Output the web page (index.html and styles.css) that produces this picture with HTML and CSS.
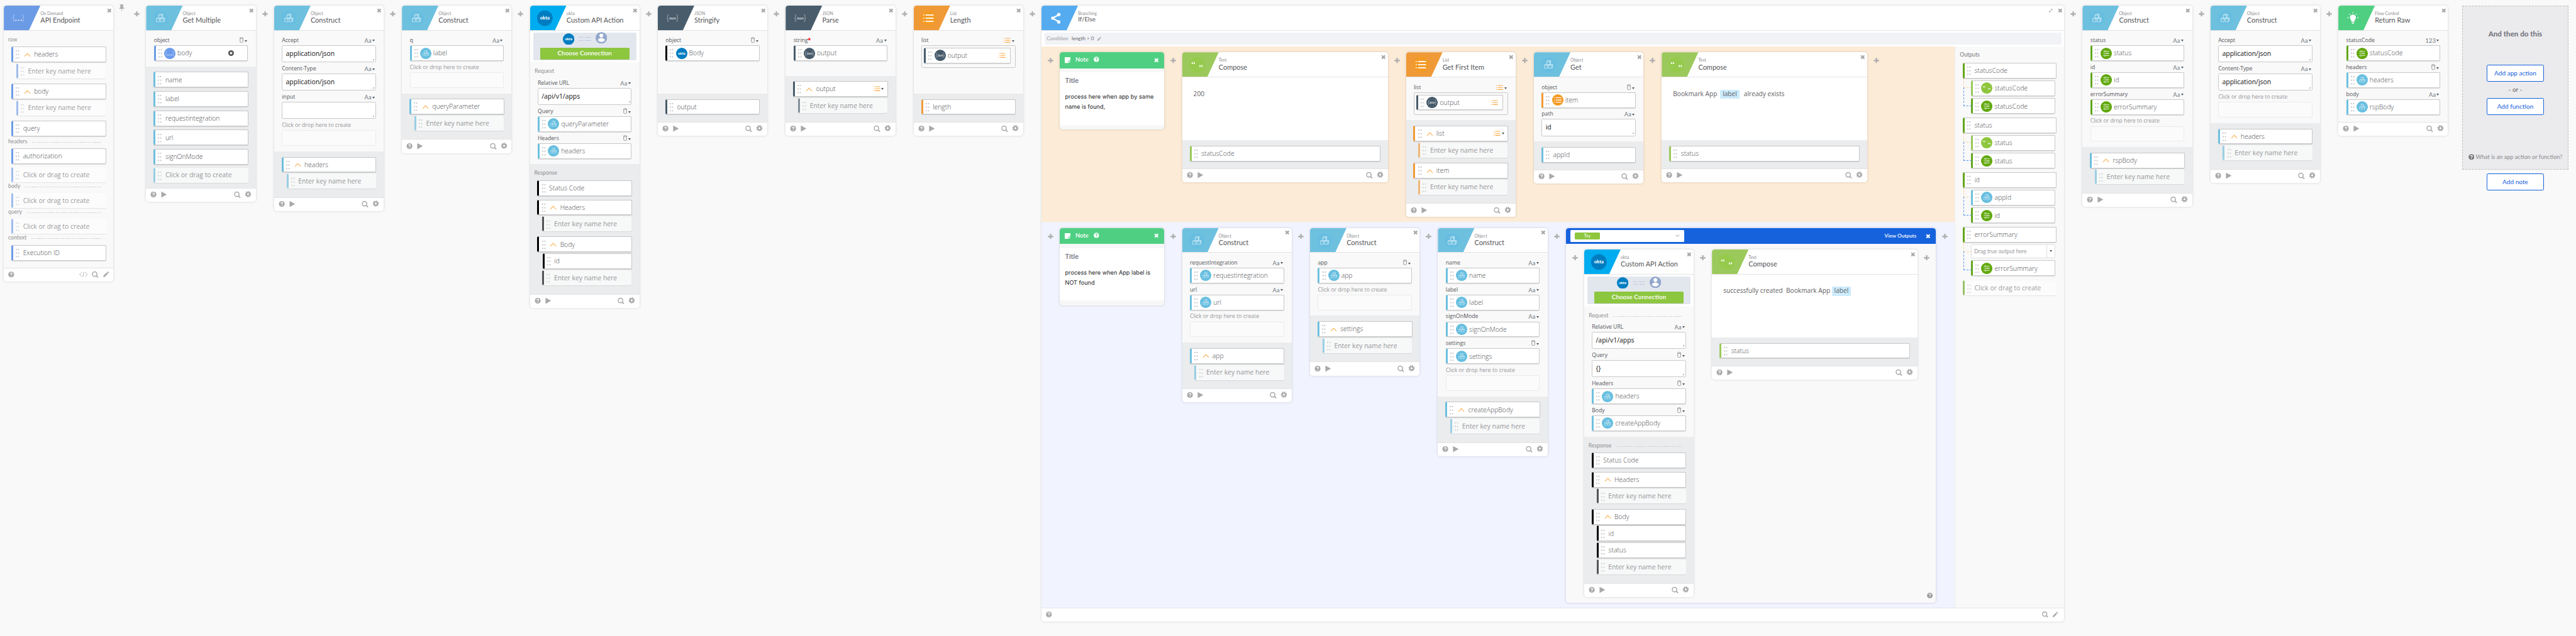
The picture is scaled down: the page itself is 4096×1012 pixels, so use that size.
FILE: index.html
```html
<!DOCTYPE html>
<html lang="en">
<head>
<meta charset="utf-8">
<title>Flow editor</title>
<link rel="stylesheet" href="styles.css">
</head>
<body>
<svg class="defs" aria-hidden="true">
  <symbol id="plus" viewBox="0 0 38 11"><path d="M13.5 5.5h11M19 0v11" stroke="#b0b0b0" stroke-width="3.1"/></symbol>
  <symbol id="close" viewBox="0 0 10 10"><path d="M1.6 1.6l6.8 6.8M8.4 1.6L1.6 8.4" stroke="currentColor" stroke-width="2.9"/></symbol>
  <symbol id="clear" viewBox="0 0 12 12"><circle cx="6" cy="6" r="6" fill="#4d4d4d"/><path d="M3.700 3.700l4.600 4.600M8.300 3.700l-4.600 4.600" stroke="#fff" stroke-width="1.900"/></symbol>
  <symbol id="pin" viewBox="0 0 12 14"><path d="M2 0h8v1.6H8.8v4L11 8v1.2H1V8l2.200-2.400v-4H2z" fill="#adadad"/><path d="M6 9v5" stroke="#adadad" stroke-width="1.300"/></symbol>
  <symbol id="help" viewBox="0 0 13 13"><circle cx="6.500" cy="6.500" r="6.300" fill="currentColor"/><path d="M4.500 5.200c0-2.600 4-2.500 4-.2 0 1.500-2 1.500-2 2.900" fill="none" stroke="var(--q,#fff)" stroke-width="1.500"/><circle cx="6.500" cy="9.900" r=".95" fill="var(--q,#fff)"/></symbol>
  <symbol id="pencil" viewBox="0 0 13 13"><path d="M1 12l.8-3.300 5.900-5.900 2.500 2.500-5.900 5.900zM8.500 2l1.100-1.100q.6-.6 1.200 0l1.300 1.300q.6.6 0 1.200L11 4.500z" fill="currentColor"/></symbol>
  <symbol id="glass" viewBox="0 0 14 14"><circle cx="5.900" cy="5.900" r="4.800" fill="none" stroke="currentColor" stroke-width="1.900"/><path d="M9.300 9.300l3.800 3.800" stroke="currentColor" stroke-width="2.200"/></symbol>
  <symbol id="gear" viewBox="0 0 14 14"><circle cx="7" cy="7" r="3.500" fill="none" stroke="currentColor" stroke-width="2.900"/><circle cx="7" cy="7" r="5.400" fill="none" stroke="currentColor" stroke-width="2.200" stroke-dasharray="2.120 2.120"/></symbol>
  <symbol id="run" viewBox="0 0 60 29"><use href="#help" x="9.500" y="7.500" width="12.600" height="12.600"/><path d="M32 7.400v12.800L43.500 13.800z" fill="currentColor"/></symbol>
  <symbol id="view" viewBox="0 0 60 29"><use href="#glass" x="14.500" y="7.300" width="14" height="14"/><use href="#gear" x="36.800" y="6" width="14" height="14"/></symbol>
  <symbol id="edit" viewBox="0 0 90 29"><path d="M23.500 9.500l-4.500 4.500 4.500 4.500M30.500 9.500l4.500 4.500-4.500 4.500M28.300 8.700l-2.600 10.600" fill="none" stroke="currentColor" stroke-width="1.100"/><use href="#glass" x="44.500" y="7.300" width="14" height="14"/><use href="#pencil" x="67" y="7.300" width="13.500" height="13.500"/></symbol>
  <symbol id="cubes" viewBox="0 0 20 18"><g fill="none" stroke="#fff" stroke-width="1" stroke-opacity=".75" stroke-linejoin="round"><path d="M1 10.500h6.600v6.200H1zM1 10.500l1.700-2h3.500M10 10.500h6.600v6.200H10zM10 10.500l1.600-2h6.900l-1.900 2M18.500 8.500v6.100l-1.900 2.100M6.200 2.700h6.500v5.800H6.200zM6.200 2.700L7.800.8h6.500l-1.600 1.900M14.300.8v5.700l-1.600 2M7.600 10.500l1.600-2"/></g></symbol>
  <symbol id="rows" viewBox="0 0 20 15"><path d="M0 1.500h2M4.500 1.500H20M0 7.500h2M4.500 7.500H20M0 13.500h2M4.500 13.500H20" stroke="currentColor" stroke-width="2.100"/></symbol>
  <symbol id="can" viewBox="0 0 8 12"><path d="M1 2v8c0 2 6 2 6 0V2" fill="none" stroke="#7d8286" stroke-width="1.100"/><ellipse cx="4" cy="2" rx="3" ry="1.300" fill="none" stroke="#7d8286"/></symbol>
  <symbol id="quotes" viewBox="0 0 24 14"><g fill="#fff" opacity=".9"><circle cx="2" cy="4" r="1.500"/><circle cx="6" cy="4" r="1.500"/><path d="M.5 4Q.5 1.200 3 .8v.8Q1.800 2.200 2 4zM4.500 4q0-2.800 2.500-3.200v.8Q5.800 2.200 6 4z"/><circle cx="17.500" cy="9" r="1.500"/><circle cx="21.500" cy="9" r="1.500"/><path d="M19 9q0 2.800-2.500 3.200v-.8Q17.700 10.800 17.500 9zM23 9q0 2.800-2.500 3.200v-.8Q21.700 10.800 21.500 9z"/></g></symbol>

  <symbol id="l-api" viewBox="0 0 76 52"><path d="M22.500 19q-2 0-2 2v2.500q0 2-1.500 2.500 1.500.5 1.500 2.500V31q0 2 2 2M38.500 19q2 0 2 2v2.500q0 2 1.500 2.500-1.500.5-1.500 2.500V31q0 2-2 2" fill="none" stroke="#fff" stroke-opacity=".6"/><path d="M24 30.300h13.500" stroke="#fff" stroke-width="2" stroke-dasharray="2.500 3"/></symbol>
  <symbol id="l-obj" viewBox="0 0 76 52"><circle cx="30.500" cy="26" r="16" fill="#68bee0"/><use href="#cubes" x="20.500" y="17" width="20" height="18"/></symbol>
  <symbol id="l-json" viewBox="0 0 76 52"><path d="M22.500 18.500q-2 0-2 2V24q0 2-1.500 2 1.500 0 1.500 2v3.500q0 2 2 2M38.500 18.500q2 0 2 2V24q0 2 1.500 2-1.500 0-1.500 2v3.500q0 2-2 2" fill="none" stroke="#fff" stroke-opacity=".6"/><text x="30.500" y="29" text-anchor="middle" class="json">Json</text></symbol>
  <symbol id="l-list" viewBox="0 0 76 52"><circle cx="30.500" cy="26" r="16" fill="#f39a24"/><g color="#fff"><use href="#rows" x="19.500" y="17.500" width="22" height="17"/></g></symbol>
  <symbol id="l-text" viewBox="0 0 76 52"><circle cx="30.500" cy="26" r="16" fill="#95ca4d"/><use href="#quotes" x="18.500" y="19" width="25" height="14.500"/></symbol>
  <symbol id="l-okta" viewBox="0 0 76 52"><circle cx="30.500" cy="26" r="16.300" fill="#007dc1"/><text x="30.500" y="29" text-anchor="middle" class="okta" font-size="10">okta</text></symbol>
  <symbol id="l-if" viewBox="0 0 76 52"><path d="M36.500 18.500L23.500 26l13 8" fill="none" stroke="#fff" stroke-width="3"/><g fill="#fff"><circle cx="36" cy="18.500" r="3.500"/><circle cx="23.500" cy="26" r="3.500"/><circle cx="36" cy="34" r="3.500"/></g></symbol>
  <symbol id="l-bulb" viewBox="0 0 76 52"><path d="M30.500 18.500a6.300 6.300 0 0 0-6.300 6.400c0 3.300 3 4.500 3.300 8.300h6c.3-3.800 3.300-5 3.300-8.300a6.300 6.300 0 0 0-6.300-6.400z" fill="#fff"/><path d="M27.700 35h5.600M28.500 37.300h4M30.500 13.500v2.500M22.500 17l1.700 1.700M38.500 17l-1.700 1.700M18.800 25h2.600M42.200 25h-2.600" stroke="#fff" stroke-width="1.400"/></symbol>

  <symbol id="a-obj" viewBox="0 0 24 24"><circle cx="12" cy="12" r="12" fill="#68bfe0"/><use href="#cubes" x="5" y="5.500" width="14" height="12.600"/></symbol>
  <symbol id="a-api" viewBox="0 0 24 24"><circle cx="12" cy="12" r="12" fill="#6c9bec"/><path d="M6 6.500q-1.700 0-1.700 2v1.700q0 1.800-1.300 1.800 1.300 0 1.300 1.800v1.700q0 2 1.700 2M18 6.500q1.700 0 1.700 2v1.700q0 1.800 1.300 1.800-1.300 0-1.300 1.800v1.700q0 2-1.700 2" fill="none" stroke="#fff" stroke-opacity=".6" stroke-width=".8"/><path d="M7 15h10" stroke="#fff" stroke-width="1.700" stroke-dasharray="2 2"/></symbol>
  <symbol id="a-json" viewBox="0 0 24 24"><circle cx="12" cy="12" r="12" fill="#465a6a"/><path d="M6 6.500q-1.700 0-1.700 2v1.700q0 1.800-1.300 1.800 1.300 0 1.300 1.800v1.700q0 2 1.700 2M18 6.500q1.700 0 1.700 2v1.700q0 1.800 1.300 1.800-1.300 0-1.300 1.800v1.700q0 2-1.700 2" fill="none" stroke="#fff" stroke-opacity=".6" stroke-width=".8"/><text x="12" y="14.500" text-anchor="middle" class="json sm">Json</text></symbol>
  <symbol id="a-okta" viewBox="0 0 24 24"><circle cx="12" cy="12" r="12" fill="#007dc1"/><text x="12" y="14.300" text-anchor="middle" class="okta" font-size="7.500">okta</text></symbol>
  <symbol id="a-list" viewBox="0 0 24 24"><circle cx="12" cy="12" r="12" fill="#f39a24"/><g color="#fff"><use href="#rows" x="4" y="6" width="16" height="12"/></g></symbol>
  <symbol id="a-text" viewBox="0 0 24 24"><circle cx="12" cy="12" r="12" fill="#8ec63f"/><use href="#quotes" x="3.500" y="7" width="17" height="10"/></symbol>
  <symbol id="a-out" viewBox="0 0 24 24"><circle cx="12" cy="12" r="12" fill="#60a80c"/><g fill="none" stroke="#fff" stroke-opacity=".85" stroke-width="1.200"><path d="M5.500 7.500h2.500m3.500 0h7M5.500 12h7m3.500 0h2.500M5.500 16.500h2.500m3.500 0h7"/><circle cx="9.700" cy="7.500" r="1.500"/><circle cx="14.200" cy="12" r="1.500"/><circle cx="9.700" cy="16.500" r="1.500"/></g></symbol>
  <symbol id="user" viewBox="0 0 24 24"><circle cx="12" cy="12" r="12" fill="#93a7cb"/><circle cx="12" cy="7.300" r="4" fill="#fff"/><ellipse cx="12" cy="16.500" rx="7" ry="4" fill="#fff"/></symbol>
</svg>

<main class="flow">
  <article class="card api">
    <header class="head"><svg class="logo"><use href="#l-api"/></svg><div class="name"><small>On Demand</small><h2>API Endpoint</h2></div><svg class="x"><use href="#close"/></svg></header>
    <section class="out plain">
      <h3 class="group">raw</h3>
      <div class="chip tree">headers</div><div class="chip ghost sub">Enter key name here</div>
      <div class="chip tree">body</div><div class="chip ghost sub">Enter key name here</div>
      <div class="chip">query</div>
      <h3 class="group">headers</h3>
      <div class="chip">authorization</div><div class="chip ghost">Click or drag to create</div>
      <h3 class="group">body</h3>
      <div class="chip ghost">Click or drag to create</div>
      <h3 class="group">query</h3>
      <div class="chip ghost">Click or drag to create</div>
      <h3 class="group">context</h3>
      <div class="chip">Execution ID</div>
    </section>
    <footer class="foot"><svg class="help"><use href="#help"/></svg><svg class="wide"><use href="#edit"/></svg></footer>
  </article>
  <svg class="pin"><use href="#pin"/></svg>
  <svg class="plus"><use href="#plus"/></svg>

  <article class="card obj">
    <header class="head"><svg class="logo"><use href="#l-obj"/></svg><div class="name"><small>Object</small><h2>Get Multiple</h2></div><svg class="x"><use href="#close"/></svg></header>
    <section class="in">
      <div class="label">object<svg class="can"><use href="#can"/></svg></div>
      <div class="chip api"><svg class="av"><use href="#a-api"/></svg>body<svg class="clear"><use href="#clear"/></svg></div>
    </section>
    <section class="out">
      <div class="chip">name</div><div class="chip">label</div><div class="chip">requestintegration</div><div class="chip">url</div><div class="chip">signOnMode</div>
      <div class="chip ghost">Click or drag to create</div>
    </section>
    <footer class="foot"><svg><use href="#run"/></svg><svg><use href="#view"/></svg></footer>
  </article>
  <svg class="plus"><use href="#plus"/></svg>

  <article class="card obj">
    <header class="head"><svg class="logo"><use href="#l-obj"/></svg><div class="name"><small>Object</small><h2>Construct</h2></div><svg class="x"><use href="#close"/></svg></header>
    <section class="in">
      <div class="label">Accept<b>Aa</b></div><div class="area">application/json</div>
      <div class="label">Content-Type<b>Aa</b></div><div class="area">application/json</div>
      <div class="label">input<b>Aa</b></div><div class="area"></div>
      <div class="label hint">Click or drop here to create</div><div class="drop"></div>
    </section>
    <section class="out"><div class="chip tree">headers</div><div class="chip ghost sub">Enter key name here</div></section>
    <footer class="foot"><svg><use href="#run"/></svg><svg><use href="#view"/></svg></footer>
  </article>
  <svg class="plus"><use href="#plus"/></svg>

  <article class="card obj">
    <header class="head"><svg class="logo"><use href="#l-obj"/></svg><div class="name"><small>Object</small><h2>Construct</h2></div><svg class="x"><use href="#close"/></svg></header>
    <section class="in">
      <div class="label">q<b>Aa</b></div><div class="chip"><svg class="av"><use href="#a-obj"/></svg>label</div>
      <div class="label hint">Click or drop here to create</div><div class="drop"></div>
    </section>
    <section class="out"><div class="chip tree">queryParameter</div><div class="chip ghost sub">Enter key name here</div></section>
    <footer class="foot"><svg><use href="#run"/></svg><svg><use href="#view"/></svg></footer>
  </article>
  <svg class="plus"><use href="#plus"/></svg>

  <article class="card okta-card">
    <header class="head"><svg class="logo"><use href="#l-okta"/></svg><div class="name"><small>okta</small><h2>Custom API Action</h2></div><svg class="x"><use href="#close"/></svg></header>
    <div class="connect"><div class="panel"><div class="link"><svg><use href="#a-okta"/></svg><i></i><svg class="user"><use href="#user"/></svg></div><button>Choose Connection</button></div></div>
    <section class="in">
      <h3 class="group">Request</h3>
      <div class="label">Relative URL<b>Aa</b></div><div class="area">/api/v1/apps</div>
      <div class="label">Query<svg class="can"><use href="#can"/></svg></div><div class="chip obj"><svg class="av"><use href="#a-obj"/></svg>queryParameter</div>
      <div class="label">Headers<svg class="can"><use href="#can"/></svg></div><div class="chip obj"><svg class="av"><use href="#a-obj"/></svg>headers</div>
    </section>
    <section class="out">
      <h3 class="group">Response</h3>
      <div class="chip">Status Code</div>
      <div class="chip tree">Headers</div><div class="chip ghost sub">Enter key name here</div>
      <div class="chip tree">Body</div><div class="chip sub">id</div><div class="chip ghost sub">Enter key name here</div>
    </section>
    <footer class="foot"><svg><use href="#run"/></svg><svg><use href="#view"/></svg></footer>
  </article>
  <svg class="plus"><use href="#plus"/></svg>

  <article class="card json-card">
    <header class="head"><svg class="logo"><use href="#l-json"/></svg><div class="name"><small>JSON</small><h2>Stringify</h2></div><svg class="x"><use href="#close"/></svg></header>
    <section class="in"><div class="label">object<svg class="can"><use href="#can"/></svg></div><div class="chip okta-card"><svg class="av"><use href="#a-okta"/></svg>Body</div></section>
    <section class="out"><div class="chip">output</div></section>
    <footer class="foot"><svg><use href="#run"/></svg><svg><use href="#view"/></svg></footer>
  </article>
  <svg class="plus"><use href="#plus"/></svg>

  <article class="card json-card">
    <header class="head"><svg class="logo"><use href="#l-json"/></svg><div class="name"><small>JSON</small><h2>Parse</h2></div><svg class="x"><use href="#close"/></svg></header>
    <section class="in"><div class="label">string<em>*</em><b>Aa</b></div><div class="chip"><svg class="av"><use href="#a-json"/></svg>output</div></section>
    <section class="out"><div class="chip tree">output<svg class="rows"><use href="#rows"/></svg><i class="caret"></i></div><div class="chip ghost sub">Enter key name here</div></section>
    <footer class="foot"><svg><use href="#run"/></svg><svg><use href="#view"/></svg></footer>
  </article>
  <svg class="plus"><use href="#plus"/></svg>

  <article class="card list-card">
    <header class="head"><svg class="logo"><use href="#l-list"/></svg><div class="name"><small>List</small><h2>Length</h2></div><svg class="x"><use href="#close"/></svg></header>
    <section class="in"><div class="label">list<svg class="rows"><use href="#rows"/></svg></div><div class="box"><div class="chip json-card"><svg class="av"><use href="#a-json"/></svg>output<svg class="rows"><use href="#rows"/></svg></div></div></section>
    <section class="out"><div class="chip">length</div></section>
    <footer class="foot"><svg><use href="#run"/></svg><svg><use href="#view"/></svg></footer>
  </article>
  <svg class="plus"><use href="#plus"/></svg>

  <article class="card branch">
    <header class="head"><svg class="logo"><use href="#l-if"/></svg><div class="name"><small>Branching</small><h2>If/Else</h2></div><svg class="shrink" viewBox="0 0 10 10"><path d="M1 9l3-3M9 1L6 4M1.500 6H4v2.500M6 1.500V4h2.500" fill="none" stroke="#a6a6a6" stroke-width="1.200"/></svg><svg class="x"><use href="#close"/></svg></header>
    <div class="cond"><p><span>Condition</span>length &gt; 0<svg><use href="#pencil"/></svg></p></div>
    <div class="split">
      <div class="lanes">
        <div class="lane yes">
          <svg class="plus"><use href="#plus"/></svg>
          <article class="card note">
            <header><svg class="sheet" viewBox="0 0 12 12"><path d="M0 0h12v7H8v5H0z" fill="#fff"/><path d="M9 8.200h3L9 12z" fill="#fff"/></svg><span>Note</span><svg class="q"><use href="#help"/></svg><svg class="x"><use href="#close"/></svg></header>
            <div class="page"><h4>Title</h4><p>process here when app by same name is found,</p></div>
          </article>
          <svg class="plus"><use href="#plus"/></svg>
          <article class="card text-card big">
            <header class="head"><svg class="logo"><use href="#l-text"/></svg><div class="name"><small>Text</small><h2>Compose</h2></div><svg class="x"><use href="#close"/></svg></header>
            <section class="in compose"><p>200</p></section>
            <section class="out"><div class="chip">statusCode</div></section>
            <footer class="foot"><svg><use href="#run"/></svg><svg><use href="#view"/></svg></footer>
          </article>
          <svg class="plus"><use href="#plus"/></svg>
          <article class="card list-card">
            <header class="head"><svg class="logo"><use href="#l-list"/></svg><div class="name"><small>List</small><h2>Get First Item</h2></div><svg class="x"><use href="#close"/></svg></header>
            <section class="in"><div class="label">list<svg class="rows"><use href="#rows"/></svg></div><div class="box"><div class="chip json-card"><svg class="av"><use href="#a-json"/></svg>output<svg class="rows"><use href="#rows"/></svg></div></div></section>
            <section class="out">
              <div class="chip tree">list<svg class="rows"><use href="#rows"/></svg><i class="caret"></i></div><div class="chip ghost sub">Enter key name here</div>
              <div class="chip tree">item</div><div class="chip ghost sub">Enter key name here</div>
            </section>
            <footer class="foot"><svg><use href="#run"/></svg><svg><use href="#view"/></svg></footer>
          </article>
          <svg class="plus"><use href="#plus"/></svg>
          <article class="card obj">
            <header class="head"><svg class="logo"><use href="#l-obj"/></svg><div class="name"><small>Object</small><h2>Get</h2></div><svg class="x"><use href="#close"/></svg></header>
            <section class="in">
              <div class="label">object<svg class="can"><use href="#can"/></svg></div><div class="chip list-card"><svg class="av"><use href="#a-list"/></svg>item</div>
              <div class="label">path<b>Aa</b></div><div class="area">id</div>
            </section>
            <section class="out"><div class="chip">appId</div></section>
            <footer class="foot"><svg><use href="#run"/></svg><svg><use href="#view"/></svg></footer>
          </article>
          <svg class="plus"><use href="#plus"/></svg>
          <article class="card text-card big">
            <header class="head"><svg class="logo"><use href="#l-text"/></svg><div class="name"><small>Text</small><h2>Compose</h2></div><svg class="x"><use href="#close"/></svg></header>
            <section class="in compose"><p>Bookmark App <mark class="pre">label</mark> already exists</p></section>
            <section class="out"><div class="chip">status</div></section>
            <footer class="foot"><svg><use href="#run"/></svg><svg><use href="#view"/></svg></footer>
          </article>
          <svg class="plus"><use href="#plus"/></svg>
        </div>

        <div class="lane no">
          <svg class="plus"><use href="#plus"/></svg>
          <article class="card note">
            <header><svg class="sheet" viewBox="0 0 12 12"><path d="M0 0h12v7H8v5H0z" fill="#fff"/><path d="M9 8.200h3L9 12z" fill="#fff"/></svg><span>Note</span><svg class="q"><use href="#help"/></svg><svg class="x"><use href="#close"/></svg></header>
            <div class="page"><h4>Title</h4><p>process here when App label is NOT found</p></div>
          </article>
          <svg class="plus"><use href="#plus"/></svg>
          <article class="card obj">
            <header class="head"><svg class="logo"><use href="#l-obj"/></svg><div class="name"><small>Object</small><h2>Construct</h2></div><svg class="x"><use href="#close"/></svg></header>
            <section class="in">
              <div class="label">requestIntegration<b>Aa</b></div><div class="chip"><svg class="av"><use href="#a-obj"/></svg>requestintegration</div>
              <div class="label">url<b>Aa</b></div><div class="chip"><svg class="av"><use href="#a-obj"/></svg>url</div>
              <div class="label hint">Click or drop here to create</div><div class="drop"></div>
            </section>
            <section class="out"><div class="chip tree">app</div><div class="chip ghost sub">Enter key name here</div></section>
            <footer class="foot"><svg><use href="#run"/></svg><svg><use href="#view"/></svg></footer>
          </article>
          <svg class="plus"><use href="#plus"/></svg>
          <article class="card obj">
            <header class="head"><svg class="logo"><use href="#l-obj"/></svg><div class="name"><small>Object</small><h2>Construct</h2></div><svg class="x"><use href="#close"/></svg></header>
            <section class="in">
              <div class="label">app<svg class="can"><use href="#can"/></svg></div><div class="chip"><svg class="av"><use href="#a-obj"/></svg>app</div>
              <div class="label hint">Click or drop here to create</div><div class="drop"></div>
            </section>
            <section class="out"><div class="chip tree">settings</div><div class="chip ghost sub">Enter key name here</div></section>
            <footer class="foot"><svg><use href="#run"/></svg><svg><use href="#view"/></svg></footer>
          </article>
          <svg class="plus"><use href="#plus"/></svg>
          <article class="card obj">
            <header class="head"><svg class="logo"><use href="#l-obj"/></svg><div class="name"><small>Object</small><h2>Construct</h2></div><svg class="x"><use href="#close"/></svg></header>
            <section class="in">
              <div class="label">name<b>Aa</b></div><div class="chip"><svg class="av"><use href="#a-obj"/></svg>name</div>
              <div class="label">label<b>Aa</b></div><div class="chip"><svg class="av"><use href="#a-obj"/></svg>label</div>
              <div class="label">signOnMode<b>Aa</b></div><div class="chip"><svg class="av"><use href="#a-obj"/></svg>signOnMode</div>
              <div class="label">settings<svg class="can"><use href="#can"/></svg></div><div class="chip"><svg class="av"><use href="#a-obj"/></svg>settings</div>
              <div class="label hint">Click or drop here to create</div><div class="drop"></div>
            </section>
            <section class="out"><div class="chip tree">createAppBody</div><div class="chip ghost sub">Enter key name here</div></section>
            <footer class="foot"><svg><use href="#run"/></svg><svg><use href="#view"/></svg></footer>
          </article>
          <svg class="plus"><use href="#plus"/></svg>
          <div class="try">
            <div class="trybar"><div class="select"><span>Try</span><svg viewBox="0 0 10 6"><path d="M1 .8l4 4 4-4" fill="none" stroke="#8a8a8a" stroke-width="1.300"/></svg></div><strong>View Outputs</strong><svg class="x"><use href="#close"/></svg></div>
            <div class="trybody">
              <svg class="plus"><use href="#plus"/></svg>
              <article class="card okta-card">
                <header class="head"><svg class="logo"><use href="#l-okta"/></svg><div class="name"><small>okta</small><h2>Custom API Action</h2></div><svg class="x"><use href="#close"/></svg></header>
                <div class="connect"><div class="panel"><div class="link"><svg><use href="#a-okta"/></svg><i></i><svg class="user"><use href="#user"/></svg></div><button>Choose Connection</button></div></div>
                <section class="in">
                  <h3 class="group">Request</h3>
                  <div class="label">Relative URL<b>Aa</b></div><div class="area">/api/v1/apps</div>
                  <div class="label">Query<svg class="can"><use href="#can"/></svg></div><div class="area">{}</div>
                  <div class="label">Headers<svg class="can"><use href="#can"/></svg></div><div class="chip obj"><svg class="av"><use href="#a-obj"/></svg>headers</div>
                  <div class="label">Body<svg class="can"><use href="#can"/></svg></div><div class="chip obj"><svg class="av"><use href="#a-obj"/></svg>createAppBody</div>
                </section>
                <section class="out">
                  <h3 class="group">Response</h3>
                  <div class="chip">Status Code</div>
                  <div class="chip tree">Headers</div><div class="chip ghost sub">Enter key name here</div>
                  <div class="chip tree">Body</div><div class="chip sub">id</div><div class="chip sub">status</div><div class="chip ghost sub">Enter key name here</div>
                </section>
                <footer class="foot"><svg><use href="#run"/></svg><svg><use href="#view"/></svg></footer>
              </article>
              <svg class="plus"><use href="#plus"/></svg>
              <article class="card text-card big">
                <header class="head"><svg class="logo"><use href="#l-text"/></svg><div class="name"><small>Text</small><h2>Compose</h2></div><svg class="x"><use href="#close"/></svg></header>
                <section class="in compose"><p>successfully created&nbsp; Bookmark App <mark>label</mark></p></section>
                <section class="out"><div class="chip">status</div></section>
                <footer class="foot"><svg><use href="#run"/></svg><svg><use href="#view"/></svg></footer>
              </article>
              <svg class="plus"><use href="#plus"/></svg>
              <svg class="tryhelp"><use href="#help"/></svg>
            </div>
          </div>
          <svg class="plus"><use href="#plus"/></svg>
        </div>
      </div>

      <aside class="outputs green">
        <h3>Outputs</h3>
        <div class="merge"><div class="chip">statusCode</div><div class="chip text-card"><svg class="av"><use href="#a-text"/></svg>statusCode</div><div class="chip"><svg class="av"><use href="#a-out"/></svg>statusCode</div></div>
        <div class="merge"><div class="chip">status</div><div class="chip text-card"><svg class="av"><use href="#a-text"/></svg>status</div><div class="chip"><svg class="av"><use href="#a-out"/></svg>status</div></div>
        <div class="merge"><div class="chip">id</div><div class="chip obj"><svg class="av"><use href="#a-obj"/></svg>appId</div><div class="chip"><svg class="av"><use href="#a-out"/></svg>id</div></div>
        <div class="merge"><div class="chip">errorSummary</div><div class="want"><span>Drag true output here</span><i class="caret"></i></div><div class="chip"><svg class="av"><use href="#a-out"/></svg>errorSummary</div></div>
        <div class="chip ghost">Click or drag to create</div>
      </aside>
    </div>
    <footer class="foot"><svg class="help"><use href="#help"/></svg><span class="tools"><svg><use href="#glass"/></svg><svg><use href="#pencil"/></svg></span></footer>
  </article>
  <svg class="plus"><use href="#plus"/></svg>

  <article class="card obj">
    <header class="head"><svg class="logo"><use href="#l-obj"/></svg><div class="name"><small>Object</small><h2>Construct</h2></div><svg class="x"><use href="#close"/></svg></header>
    <section class="in">
      <div class="label">status<b>Aa</b></div><div class="chip green"><svg class="av"><use href="#a-out"/></svg>status</div>
      <div class="label">id<b>Aa</b></div><div class="chip green"><svg class="av"><use href="#a-out"/></svg>id</div>
      <div class="label">errorSummary<b>Aa</b></div><div class="chip green"><svg class="av"><use href="#a-out"/></svg>errorSummary</div>
      <div class="label hint">Click or drop here to create</div><div class="drop"></div>
    </section>
    <section class="out"><div class="chip tree">rspBody</div><div class="chip ghost sub">Enter key name here</div></section>
    <footer class="foot"><svg><use href="#run"/></svg><svg><use href="#view"/></svg></footer>
  </article>
  <svg class="plus"><use href="#plus"/></svg>

  <article class="card obj">
    <header class="head"><svg class="logo"><use href="#l-obj"/></svg><div class="name"><small>Object</small><h2>Construct</h2></div><svg class="x"><use href="#close"/></svg></header>
    <section class="in">
      <div class="label">Accept<b>Aa</b></div><div class="area">application/json</div>
      <div class="label">Content-Type<b>Aa</b></div><div class="area">application/json</div>
      <div class="label hint">Click or drop here to create</div><div class="drop"></div>
    </section>
    <section class="out"><div class="chip tree">headers</div><div class="chip ghost sub">Enter key name here</div></section>
    <footer class="foot"><svg><use href="#run"/></svg><svg><use href="#view"/></svg></footer>
  </article>
  <svg class="plus"><use href="#plus"/></svg>

  <article class="card flow-card">
    <header class="head"><svg class="logo"><use href="#l-bulb"/></svg><div class="name"><small>Flow Control</small><h2>Return Raw</h2></div><svg class="x"><use href="#close"/></svg></header>
    <section class="in">
      <div class="label">statusCode<b>123</b></div><div class="chip green"><svg class="av"><use href="#a-out"/></svg>statusCode</div>
      <div class="label">headers<svg class="can"><use href="#can"/></svg></div><div class="chip obj"><svg class="av"><use href="#a-obj"/></svg>headers</div>
      <div class="label">body<b>Aa</b></div><div class="chip obj"><svg class="av"><use href="#a-obj"/></svg>rspBody</div>
    </section>
    <footer class="foot"><svg><use href="#run"/></svg><svg><use href="#view"/></svg></footer>
  </article>

  <div class="next">
    <div class="nextbox">
      <h2>And then do this</h2>
      <button>Add app action</button><span>- or -</span><button>Add function</button>
      <p><svg><use href="#help"/></svg>What is an app action or function?</p>
    </div>
    <button>Add note</button>
  </div>
</main>
</body>
</html>
```
FILE: styles.css
```css
* { box-sizing: border-box; }
body { margin: 0; background: #f9f9f9; color: #5f6063; font-family: Lato, sans-serif; overflow: hidden; }
h2, h3, h4, p { margin: 0; font-weight: 400; }
button { font: inherit; }
.defs { display: none; }
.json { font: 700 7.500px Lato, sans-serif; fill: #fff; fill-opacity: .75; }
.json.sm { font-size: 6.200px; }
.okta { font-family: Lato, sans-serif; font-weight: 900; fill: #fff; }

/* the canvas is laid out at full scale, then shown at the overview zoom */
.flow { zoom: .7646; display: flex; align-items: flex-start; width: 5357px; height: 1323px; padding: 11.500px 0 0 8px; }
.plus { flex: none; width: 38px; height: 11px; margin-top: 12px; }
.pin { flex: none; width: 12px; height: 14px; margin: -2.500px 7px 0 11px; }

/* accent colours */
.api { --c: #6c9be6; }
.obj { --c: #6ec0df; }
.okta-card { --c: #000; --h: #00acf0; }
.json-card { --c: #495c6b; }
.list-card { --c: #f09a37; }
.text-card { --c: #9bc95b; }
.branch { --c: #55abf0; }
.flow-card { --c: #4fcf82; }
.green { --c: #62a71a; }

.card { flex: none; display: flex; flex-direction: column; width: 228px; min-height: 270.700px; border-radius: 6px; background: #fff; box-shadow: 0 0 5px rgba(0, 0, 0, .17); }
.big { width: 427.500px; }
.head { flex: none; display: flex; height: 52px; border-bottom: 1px solid #e3e3e3; border-radius: 6px 6px 0 0; overflow: hidden; }
.logo { flex: none; width: 76px; height: 52px; background: var(--h, var(--c)); clip-path: polygon(0 0, 100% 0, 52px 100%, 0 100%); }
.name { flex: 1; padding-top: 10.500px; }
.name small { display: block; font-size: 8.900px; line-height: 11px; color: #8f9093; }
.name h2 { font-size: 14.350px; line-height: 17px; color: #555659; white-space: nowrap; }
.branch > .head h2 { font-size: 13px; line-height: 15px; }
.x { flex: none; width: 10px; height: 10px; margin: 5px 4px 0 0; color: #a6a6a6; }

/* inputs */
.in { flex: 1; padding: 7.400px 16.200px 11.600px; background: #f9f9f9; }
.label { display: flex; height: 23.500px; padding-top: 5px; font: 11.350px/18px "Open Sans", sans-serif; white-space: nowrap; color: #55565a; }
.label em { color: #f00; font-weight: 700; font-style: normal; }
.label b { margin-left: auto; font: 12px/17px Lato, sans-serif; letter-spacing: .4px; color: #6c7680; }
.label b::after, .label:has(svg)::after, .caret { content: ""; flex: none; display: inline-block; border: 3.200px solid transparent; border-top: 4px solid #555; border-bottom: 0; }
.label b::after { margin: 0 2.200px 2px 1.500px; }
.label:has(svg)::after { margin: 8px 2.200px 0 2.500px; }
.label.hint { color: #96979a; }
.can { width: 8px; height: 12px; margin: 1.500px 0 0 auto; }
.rows { flex: none; width: 14px; height: 11px; margin: 3px 0 0 auto; color: #fbab45; }
.chip .rows { margin: 0 9px 0 auto; }
.chip .rows:has(+ .caret) { margin-right: 2.500px; }
.chip .caret { margin-right: 7px; }

/* draggable field */
.chip { position: relative; display: flex; align-items: center; height: 32.500px; padding-left: 20.500px; border: 1px solid #c9c9c9; border-left: 4.500px solid var(--c); border-radius: 3px; background: #fff; box-shadow: 0 1px 1px rgba(0, 0, 0, .12); font: 300 13.550px/1 "Open Sans", sans-serif; color: #4e4f52; white-space: nowrap; }
.chip::before { content: ""; position: absolute; left: 4.100px; top: 4.200px; width: 9.600px; height: 22.500px; background: radial-gradient(circle at center, #c2c2c2 1.350px, transparent 1.800px) 0 0 / 4.800px 7.500px; }
.chip.tree { padding-left: 43.500px; }
.chip.tree::after { content: ""; position: absolute; left: 25px; top: 14px; width: 8px; height: 8px; border: solid #fbab45; border-width: 1.900px 0 0 1.900px; transform: rotate(45deg); }
.av { flex: none; width: 23.600px; height: 23.600px; margin: 0 4px 0 -3.200px; }
.clear { flex: none; width: 11.700px; height: 11.700px; margin: 0 28.500px 0 auto; }
.chip.ghost { height: 31.400px; border-color: transparent; border-left-color: var(--c); opacity: .64; font-weight: 400; font-size: 13.600px; color: #66676a; }

.area { height: 35.500px; padding: 0 7px; border: 1px solid #c9c9c9; border-radius: 3px; font: 13.650px/33px "Open Sans", sans-serif; color: #111; background: linear-gradient(135deg, transparent 47%, #777 47%, #777 56%, transparent 56%, transparent 72%, #777 72%, #777 81%, transparent 81%) right 2px bottom 3px / 7px 7px no-repeat, #fff; }
.drop { height: 32.400px; border: 1px solid #ebebeb; border-radius: 2px; background: #fbfbfb; }
.box { height: 47px; padding: 3.700px 8.700px 0 4.300px; border: 1px solid #c9c9c9; border-radius: 3px; }

/* results */
.out { flex: none; padding: 11.200px 15.500px 7.100px; background: #ebecee; }
.out.plain { flex: 1; padding-bottom: 7.500px; background: #f9f9f9; }
.out .chip { margin-bottom: 7.600px; }
.out .tree:has(+ .sub), .out .sub:has(+ .sub) { margin-bottom: 2.500px; }
.out .sub { margin-left: 10.800px; }
.out .ghost { margin: -1.300px 0 3.900px; }
.out .ghost.sub { margin: 0 .8px 10.700px 10.300px; }
.group { display: flex; align-items: center; height: 18px; padding: 0 8px 11px 0; margin: 0 0 0 -6.500px; font-size: 11.450px; line-height: 1; color: #8f9093; }
.group::after { content: ""; flex: 1; margin: 3px 0 0 10px; height: 1.200px; background: repeating-linear-gradient(90deg, #cfcfcf 0 3px, transparent 3px 5px); }
.group:first-child { margin-top: 4.100px; }
.ghost + .group { margin-top: 5.500px; }
.in .group:first-child { height: 18.500px; margin-top: 8px; margin-bottom: -4.200px; }

.foot { flex: none; display: flex; justify-content: space-between; height: 29px; border-top: 1px solid #e3e3e3; color: #a8a8a8; }
.foot svg { width: 60px; height: 29px; margin-top: -1px; }
.foot .wide { width: 90px; }
.foot .help { width: 12.600px; height: 12.600px; margin: 7px 0 0 9.500px; }
.tools { display: flex; gap: 8px; padding: 7px 12px 0 0; }
.tools svg { width: 13px; height: 13px; margin: 0; }

.connect { flex: none; height: 66.300px; padding: 4.300px 6.500px 0; }
.panel { display: flex; flex-direction: column; align-items: center; height: 58.300px; border-radius: 2px; background: #e2e7ee; }
.link { display: flex; gap: 10px; padding-top: 1px; height: 31.400px; }
.link svg { width: 24px; height: 24px; }
.link .user { margin-top: -1.500px; }
.link i { width: 24px; height: 6.500px; margin-top: 9px; background: repeating-linear-gradient(90deg, #aab8d2 0 2.500px, transparent 2.500px 4.300px) top / 100% 1.200px no-repeat, repeating-linear-gradient(90deg, #aab8d2 0 2.500px, transparent 2.500px 4.300px) bottom / 100% 1.200px no-repeat; }
.panel button { width: 186px; height: 24.300px; padding: 0 0 2px; border: 0; border-radius: 2px; background: #8dc63f; color: #fff; font-size: 13px; font-weight: 600; box-shadow: 0 1px 0 #7fb63a; }

.compose { padding: 22px 23.500px; background: #fff; font: 13.300px/24px "Open Sans", sans-serif; }
.compose p { white-space: nowrap; }
.compose mark { display: inline-block; padding: 0 5px 1px; line-height: 17.500px; background: #ccecfd; color: inherit; border-radius: 2px; }
.compose .pre { margin: 0 6px 0 3px; }

/* branching */
.branch { width: 2127px; }
.branch > .head .shrink { width: 10px; height: 10px; margin: 5px 9px 0 0; }
.cond { height: 33.500px; padding: 4.300px 6px 0; }
.cond p { display: flex; align-items: center; height: 25px; padding-left: 5px; border-radius: 2px; background: #f2f3f7; font-size: 10.400px; color: #626367; }
.cond span { margin-right: 7px; color: #999a9d; }
.cond svg { width: 10px; height: 10px; margin-left: 6px; color: #aaa; }
.split { display: flex; }
.lanes { width: 1898.500px; }
.lane { display: flex; align-items: flex-start; padding: 12px 0 10.500px; }
.yes { background: #fcebd6; }
.no { background: #f1f3ff; }
.outputs { flex: 1; padding: 10px 15.500px 0 16px; border-left: 1px solid #ededed; background: #f9f9f9; }
.outputs h3 { height: 23.500px; margin-left: -6px; font-size: 11.450px; line-height: 14px; color: #77787b; }

.note { width: 216.500px; min-height: 161px; background: #f7f7f7; }
.note header { display: flex; align-items: center; height: 33px; padding-left: 10.500px; border-radius: 6px 6px 0 0; background: #4fcf82; color: #fff; --q: #4fcf82; }
.note header span { margin: -3px 11px 0 10px; font-size: 12.400px; font-weight: 600; }
.sheet { width: 12px; height: 12px; }
.note .q { width: 11.500px; height: 11.500px; margin-top: -3px; }
.note .x { margin: 0 11px 0 auto; color: #fff; }
.page { flex: none; height: 109px; margin: 9px 0 10px; padding: 9px 11px; background: #fff; font-family: Inter, sans-serif; }
.page h4 { font-size: 13px; line-height: 17px; font-weight: 700; color: #85868f; margin-bottom: 14.500px; }
.page p { font-size: 12px; line-height: 21px; color: #1d1d1f; }

.try { width: 769px; border-radius: 6px; background: #f9f9f9; box-shadow: 0 0 5px rgba(0, 0, 60, .2); }
.trybar { display: flex; align-items: center; height: 33.300px; padding-left: 9px; border-radius: 6px 6px 0 0; background: #1662dd; color: #fff; }
.trybar strong { margin: -2px 20px 0 auto; font-size: 10.800px; font-weight: 600; }
.trybar .x { margin: 1px 10px 0 0; color: #fff; }
.select { display: flex; align-items: center; width: 237.700px; height: 24px; padding: 0 10px 0 9.500px; border-radius: 2px; background: #fff; }
.select span { width: 52.500px; height: 14.500px; border-radius: 2px; background: #8dc63f; font-size: 10.400px; line-height: 13.500px; text-align: center; }
.select svg { width: 9px; height: 6px; margin-left: auto; }
.trybody { display: flex; align-items: flex-start; padding: 11.500px 0 11.700px; }
.tryhelp { align-self: flex-end; flex: none; width: 12px; height: 12px; margin: 0 0 -3px -18px; color: #999; }

.merge { position: relative; margin-bottom: 7.300px; }
.merge > * + * { margin: 4.500px 3.500px 0 17.500px; }
.merge::before { content: ""; position: absolute; left: 1px; top: 32px; width: 16.500px; height: 19px; border: dashed #fbd5a2; border-width: 0 0 1px 1px; }
.merge::after { content: ""; position: absolute; left: 1px; top: 51px; width: 16.500px; height: 38px; border: dashed #5b93e8; border-width: 0 0 1px 1px; }
.merge > .chip:first-child { z-index: 1; }
.want { display: flex; align-items: center; height: 28.500px; border: 1px solid #dedede; border-radius: 3px; background: #fff; font-size: 11.400px; color: #999a9d; }
.merge > .want + .chip { margin-top: 4.700px; }
.want span { flex: 1; padding-left: 5px; line-height: 26px; border-right: 1px solid #dedede; }
.want .caret { margin: 0 5px; }
.merge + .ghost { margin-top: 9.500px; }

/* end of the flow */
.next { display: flex; flex-direction: column; align-items: center; width: 222px; margin-left: 29px; }
.nextbox { display: flex; flex-direction: column; align-items: center; width: 100%; height: 341px; padding-top: 47.500px; border: 1.500px dashed #bfbfc3; background: #ebebed; }
.nextbox h2 { margin-bottom: 55px; font-size: 15.200px; line-height: 20px; font-weight: 700; color: #6e6e78; }
.nextbox > span { height: 33.300px; line-height: 32px; font-size: 13.200px; }
.next button { width: 118.500px; height: 35.300px; padding: 0 0 2px; border: 1px solid #1662dd; border-radius: 3px; background: #fff; color: #1662dd; font-size: 13.200px; }
.nextbox p { display: flex; align-items: center; gap: 3px; margin-top: 79px; font-size: 12px; line-height: 18px; white-space: nowrap; color: #8a8a90; }
.nextbox p svg { width: 12.500px; height: 12.500px; color: #7b7b7b; }
.next > button { margin-top: 8.500px; }
```
